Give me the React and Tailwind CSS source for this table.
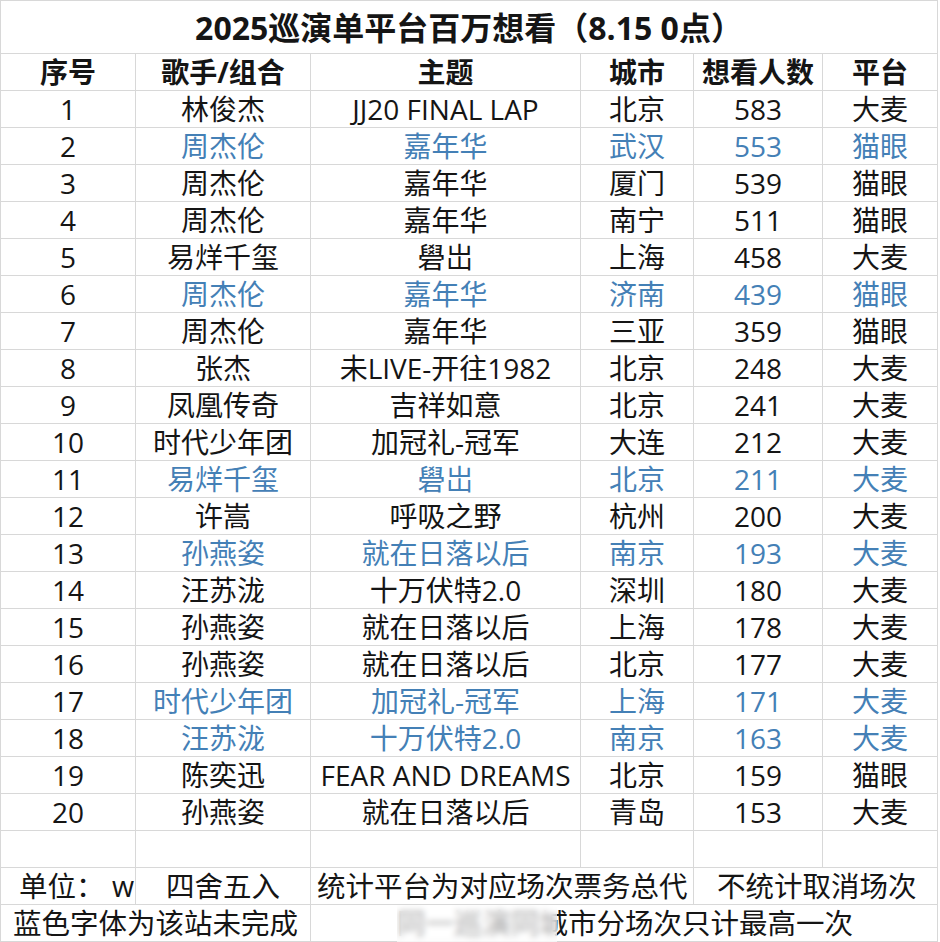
const rows = [
  [1, "林俊杰", "JJ20 FINAL LAP", "北京", 583, "大麦", false],
  [2, "周杰伦", "嘉年华", "武汉", 553, "猫眼", true],
  [3, "周杰伦", "嘉年华", "厦门", 539, "猫眼", false],
  [4, "周杰伦", "嘉年华", "南宁", 511, "猫眼", false],
  [5, "易烊千玺", "礐岀", "上海", 458, "大麦", false],
  [6, "周杰伦", "嘉年华", "济南", 439, "猫眼", true],
  [7, "周杰伦", "嘉年华", "三亚", 359, "猫眼", false],
  [8, "张杰", "未LIVE-开往1982", "北京", 248, "大麦", false],
  [9, "凤凰传奇", "吉祥如意", "北京", 241, "大麦", false],
  [10, "时代少年团", "加冠礼-冠军", "大连", 212, "大麦", false],
  [11, "易烊千玺", "礐岀", "北京", 211, "大麦", true],
  [12, "许嵩", "呼吸之野", "杭州", 200, "大麦", false],
  [13, "孙燕姿", "就在日落以后", "南京", 193, "大麦", true],
  [14, "汪苏泷", "十万伏特2.0", "深圳", 180, "大麦", false],
  [15, "孙燕姿", "就在日落以后", "上海", 178, "大麦", false],
  [16, "孙燕姿", "就在日落以后", "北京", 177, "大麦", false],
  [17, "时代少年团", "加冠礼-冠军", "上海", 171, "大麦", true],
  [18, "汪苏泷", "十万伏特2.0", "南京", 163, "大麦", true],
  [19, "陈奕迅", "FEAR AND DREAMS", "北京", 159, "猫眼", false],
  [20, "孙燕姿", "就在日落以后", "青岛", 153, "大麦", false],
];

const cell = "border border-[#d8d8d8] p-0 whitespace-nowrap";

export default function App() {
  return (
    <div
      className="bg-white w-[940px] h-[942px] overflow-hidden text-[#151515]"
      style={{ fontFamily: '"Open Sans", "Noto Sans CJK SC", sans-serif' }}
    >
      <table className="table-fixed border-collapse w-[937px] text-[28px] leading-none">
        <colgroup>
          <col className="w-[135px]" />
          <col className="w-[175px]" />
          <col className="w-[270px]" />
          <col className="w-[113px]" />
          <col className="w-[129px]" />
          <col className="w-[115px]" />
        </colgroup>
        <tbody>
          <tr className="h-[53px]">
            <td colSpan={6} className={`${cell} text-center font-bold text-[32px] pt-[2px]`}>
              2025巡演单平台百万想看（8.15 0点）
            </td>
          </tr>
          <tr className="h-[37px] font-bold">
            {["序号", "歌手/组合", "主题", "城市", "想看人数", "平台"].map((h) => (
              <td key={h} className={`${cell} text-center`}>
                {h}
              </td>
            ))}
          </tr>
          {rows.map(([n, artist, theme, city, count, platform, blue]) => {
            const c = blue ? "text-[#4480b6]" : "";
            return (
              <tr key={n} className="h-[37px] text-center">
                <td className={cell}>{n}</td>
                <td className={`${cell} ${c}`}>{artist}</td>
                <td className={`${cell} ${c}`}>{theme}</td>
                <td className={`${cell} ${c}`}>{city}</td>
                <td className={`${cell} ${c}`}>{count}</td>
                <td className={`${cell} ${c}`}>{platform}</td>
              </tr>
            );
          })}
          <tr className="h-[37px]">
            {[0, 1, 2, 3, 4, 5].map((i) => (
              <td key={i} className={cell}></td>
            ))}
          </tr>
          <tr className="h-[37px] text-[28.5px]">
            <td className={`${cell} pl-[18px] whitespace-pre`}>单位： w</td>
            <td className={`${cell} text-center`}>四舍五入</td>
            <td colSpan={2} className={`${cell} pl-[6px]`}>
              统计平台为对应场次票务总代
            </td>
            <td colSpan={2} className={`${cell} pl-[23px]`}>
              不统计取消场次
            </td>
          </tr>
          <tr className="h-[37px] text-[28.5px]">
            <td colSpan={2} className={`${cell} pl-[12px]`}>
              蓝色字体为该站未完成
            </td>
            <td colSpan={4} className={`${cell} pl-[86px]`}>
              <div className="relative inline-block">
                同一巡演同城市分场次只计最高一次
                <div className="absolute left-0 top-[-4px] w-[160px] h-[40px] bg-white/60 backdrop-blur-[3px]" />
              </div>
            </td>
          </tr>
        </tbody>
      </table>
    </div>
  );
}
